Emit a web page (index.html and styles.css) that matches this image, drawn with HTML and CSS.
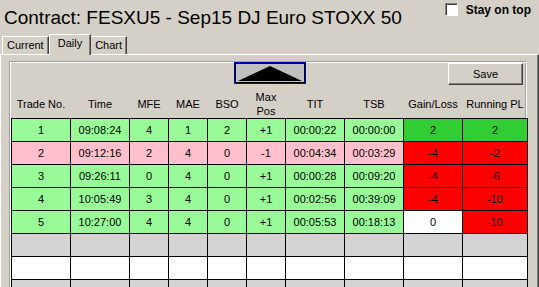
FILE: index.html
```html
<!DOCTYPE html>
<html lang="en">
<head>
    <meta charset="UTF-8">
    <title>Trade Stats</title>
    <link rel="stylesheet" href="styles.css">
</head>
<body>
    <div class="header">
        <h1 class="title">Contract: FESXU5 - Sep15 DJ Euro STOXX 50</h1>
        <label class="stay"><span class="check"></span>Stay on top</label>
    </div>

    <div class="tabs">
        <div class="tab">Current</div>
        <div class="tab active">Daily</div>
        <div class="tab">Chart</div>
    </div>

    <div class="page">
        <div class="panel">
            <div class="toolbar">
                <button class="collapse" type="button">
                    <svg width="64" height="16" viewBox="0 0 64 16"><polygon points="0,16 32,1 64,16" fill="#000"/></svg>
                </button>
                <button class="save" type="button">Save</button>
            </div>

            <table class="grid">
                <colgroup>
                    <col class="w59"><col class="w59"><col class="w39"><col class="w39"><col class="w39">
                    <col class="w39"><col class="w59"><col class="w59"><col class="w59"><col class="w65">
                </colgroup>
                <thead>
                    <tr>
                        <th>Trade No.</th><th>Time</th><th>MFE</th><th>MAE</th><th>BSO</th>
                        <th>Max<br>Pos</th><th>TIT</th><th>TSB</th><th>Gain/Loss</th><th>Running PL</th>
                    </tr>
                </thead>
                <tbody>
                    <tr class="win">
                        <td>1</td><td>09:08:24</td><td>4</td><td>1</td><td>2</td><td>+1</td><td>00:00:22</td><td>00:00:00</td>
                        <td class="up">2</td><td class="up">2</td>
                    </tr>
                    <tr class="loss">
                        <td>2</td><td>09:12:16</td><td>2</td><td>4</td><td>0</td><td>-1</td><td>00:04:34</td><td>00:03:29</td>
                        <td class="down">-4</td><td class="down">-2</td>
                    </tr>
                    <tr class="win">
                        <td>3</td><td>09:26:11</td><td>0</td><td>4</td><td>0</td><td>+1</td><td>00:00:28</td><td>00:09:20</td>
                        <td class="down">-4</td><td class="down">-6</td>
                    </tr>
                    <tr class="win">
                        <td>4</td><td>10:05:49</td><td>3</td><td>4</td><td>0</td><td>+1</td><td>00:02:56</td><td>00:39:09</td>
                        <td class="down">-4</td><td class="down">-10</td>
                    </tr>
                    <tr class="win">
                        <td>5</td><td>10:27:00</td><td>4</td><td>4</td><td>0</td><td>+1</td><td>00:05:53</td><td>00:18:13</td>
                        <td class="flat">0</td><td class="down">-10</td>
                    </tr>
                    <tr class="empty"><td></td><td></td><td></td><td></td><td></td><td></td><td></td><td></td><td></td><td></td></tr>
                    <tr class="empty alt"><td></td><td></td><td></td><td></td><td></td><td></td><td></td><td></td><td></td><td></td></tr>
                    <tr class="empty"><td></td><td></td><td></td><td></td><td></td><td></td><td></td><td></td><td></td><td></td></tr>
                </tbody>
            </table>
        </div>
    </div>
</body>
</html>
```

FILE: styles.css
```css
html, body {
    overflow: hidden;
}
body {
    margin: 0;
    width: 539px;
    height: 287px;
    background: #d4d0c8;
    font-family: "Liberation Sans", Arial, sans-serif;
    color: #000;
}
.header {
    display: flex;
    justify-content: space-between;
    height: 34px;
}
.title {
    margin: 0;
    padding: 5px 0 0 4px;
    font-size: 19px;
    font-weight: normal;
    line-height: 25px;
}
.stay {
    display: flex;
    align-items: flex-start;
    gap: 8px;
    padding: 3px 8px 0 0;
    font-size: 12px;
    font-weight: bold;
    line-height: 14px;
}
.check {
    width: 11px;
    height: 11px;
    background: #fff;
    border: 1px solid;
    border-color: #808080 #fff #fff #808080;
    box-shadow: inset 1px 1px 0 #404040;
}
.tabs {
    display: flex;
    align-items: flex-end;
    height: 20px;
    padding-left: 2px;
    font-size: 11px;
}
.tab {
    height: 17px;
    padding: 0 4px;
    line-height: 16px;
    border: 1px solid;
    border-color: #fff #404040 transparent #fff;
    border-bottom: none;
    box-shadow: inset -1px 0 0 #808080;
}
.tab.active {
    position: relative;
    height: 20px;
    margin: 0 -1px -1px 0;
    padding: 0 8px;
    line-height: 17px;
    background: #d4d0c8;
}
.page {
    height: 226px;
    overflow: hidden;
    padding: 6px 11px 0 8px;
    border-top: 1px solid #fff;
    border-left: 1px solid #fff;
    border-right: 1px solid #404040;
    box-shadow: inset -1px 0 0 #808080;
}
.panel {
    height: 240px;
    border: 1px solid;
    border-color: #a0a0a0 #fff #fff #a0a0a0;
    box-shadow: inset 1px 1px 0 #fff, inset -1px -1px 0 #a0a0a0;
    padding: 1px 0 0 1px;
}
.toolbar {
    display: flex;
    align-items: flex-start;
    height: 27px;
    padding-left: 223px;
}
.collapse {
    width: 72px;
    height: 22px;
    margin-top: -1px;
    padding: 0 0 2px;
    background: #c0c0c0;
    border: 1px solid #0000c0;
    box-shadow: inset 0 0 0 1px #000;
    display: flex;
    align-items: flex-end;
    justify-content: center;
}
.save {
    width: 75px;
    height: 22px;
    margin: 0 3px 0 auto;
    padding: 0;
    background: #d4d0c8;
    border: 1px solid;
    border-color: #fff #404040 #404040 #fff;
    box-shadow: inset -1px -1px 0 #808080;
    font-family: "Liberation Sans", Arial, sans-serif;
    font-size: 11px;
    color: #000;
}
.grid {
    width: 517px;
    border-collapse: collapse;
    table-layout: fixed;
    font-size: 11px;
}
.w59 { width: 59px; }
.w39 { width: 39px; }
.w65 { width: 65px; }
.grid th {
    height: 26px;
    padding: 0;
    font-weight: normal;
    line-height: 14px;
    vertical-align: middle;
}
.grid td {
    height: 22px;
    padding: 0;
    border: 1px solid #000;
    text-align: center;
}
.win td { background: #98fb98; }
.loss td { background: #ffc0cb; }
.win td.up { background: #32cd32; }
.grid td.down { background: #ff0000; }
.grid td.flat { background: #fff; }
.empty td { background: #d3d3d3; }
.empty.alt td { background: #fff; }
```
